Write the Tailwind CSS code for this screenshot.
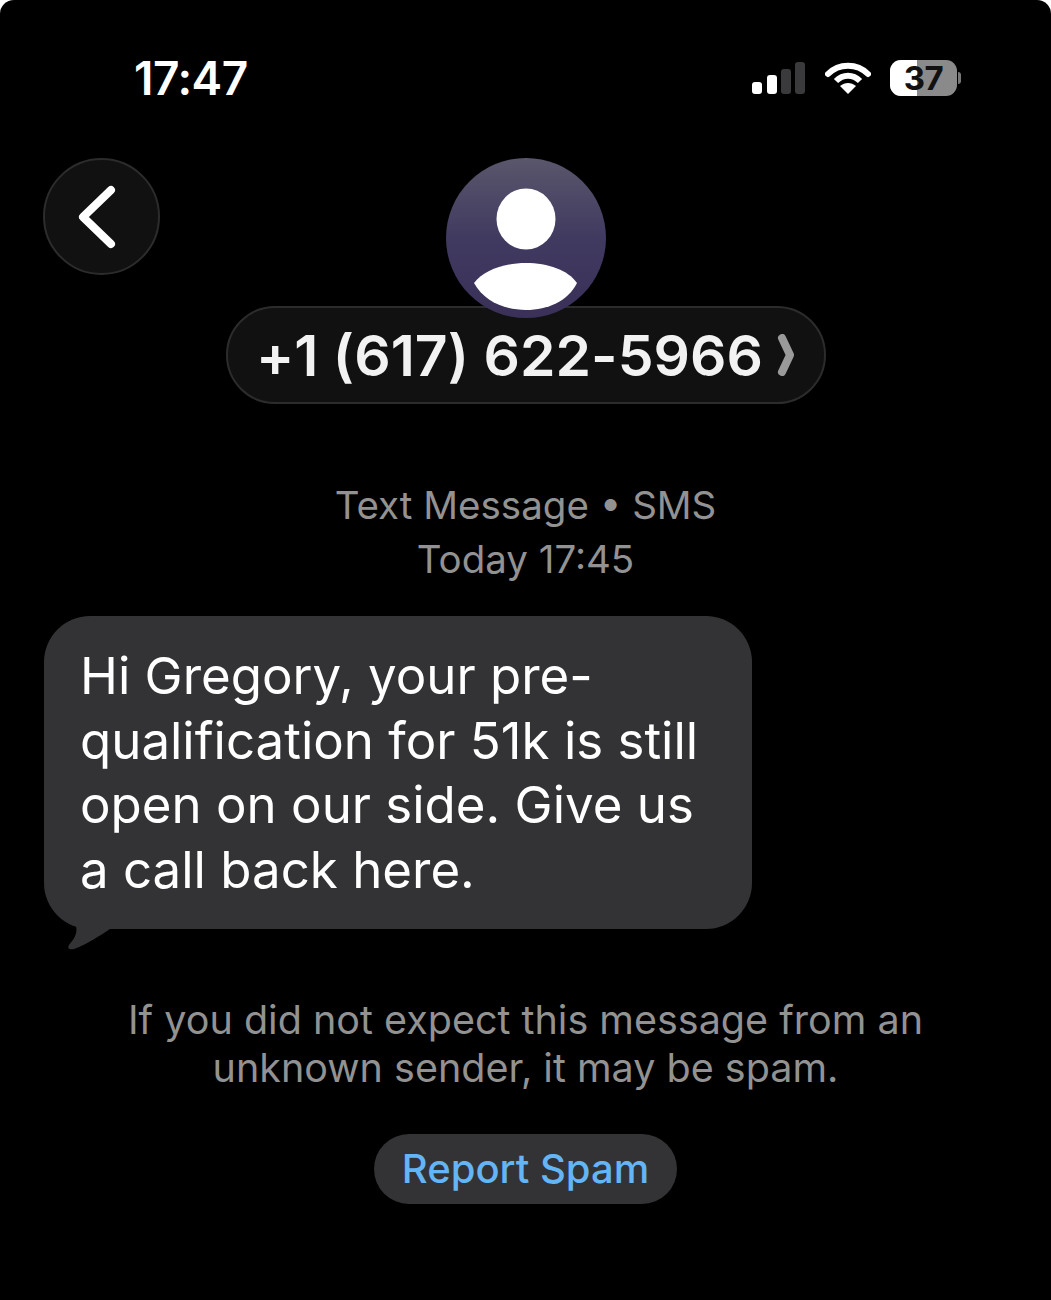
<!DOCTYPE html>
<html lang="en">
<head>
    <meta charset="UTF-8">
    <meta name="viewport" content="width=device-width, initial-scale=1.0">
    <title>Messages</title>
    <script src="https://cdn.jsdelivr.net/npm/@tailwindcss/browser@4"></script>
</head>
<body class="bg-white font-['Inter',sans-serif]">
    <div class="relative w-[1051px] h-[1300px] bg-black rounded-t-[14px] overflow-hidden flex flex-col items-center">

        <!-- Status bar -->
        <div class="w-full h-[158px] shrink-0 flex items-start justify-between pl-[134px] pr-[90px] pt-[50px]">
            <div class="text-[46px] leading-[56px] font-semibold text-white tracking-[-0.5px]">17:47</div>
            <div class="flex items-center pt-[10px]">
                <svg width="54" height="34" viewBox="0 0 54 34" class="mr-[19px]">
                    <rect x="0" y="21" width="10" height="12" rx="3" fill="#fff"/>
                    <rect x="15" y="14" width="10" height="19" rx="3" fill="#fff"/>
                    <rect x="29" y="8" width="10" height="25" rx="3" fill="#3a3a3c"/>
                    <rect x="43" y="1" width="10" height="32" rx="3" fill="#3a3a3c"/>
                </svg>
                <svg width="46" height="34" viewBox="0 0 46 34" class="mr-[19px]">
                    <path d="M3 13 C14 2 32 2 43 13" fill="none" stroke="#fff" stroke-width="6" stroke-linecap="round"/>
                    <path d="M11 20 C18 13 28 13 35 20" fill="none" stroke="#fff" stroke-width="6"/>
                    <path d="M23 33 L15 25 C20 21 26 21 31 25 Z" fill="#fff"/>
                </svg>
                <div class="relative flex items-center">
                    <div class="relative w-[67px] h-[36px] rounded-[11px] bg-[#8a8a8a] flex items-center justify-center">
                        <div class="absolute left-0 top-0 bottom-0 w-[27px] rounded-l-[11px] bg-white"></div>
                        <span class="relative text-[33px] leading-[36px] font-bold text-[#111] tracking-[-0.5px]">37</span>
                    </div>
                    <div class="w-[3px] h-[12px] ml-[1px] rounded-r-full bg-[#777]"></div>
                </div>
            </div>
        </div>

        <!-- Back button -->
        <div class="absolute left-[43px] top-[158px] w-[117px] h-[117px] rounded-full bg-[#111] border-2 border-[#2c2c2c] flex items-center justify-center">
            <svg width="40" height="64" viewBox="0 0 40 64" class="mr-[10px]">
                <path d="M34 5 L6 32 L34 59" fill="none" stroke="#fff" stroke-width="8" stroke-linecap="round" stroke-linejoin="round"/>
            </svg>
        </div>

        <!-- Avatar -->
        <div class="relative z-10 w-[160px] h-[160px] shrink-0 rounded-full overflow-hidden bg-gradient-to-b from-[#5a566b] via-[#413a60] to-[#3a3058]">
            <svg width="160" height="160" viewBox="0 0 160 160">
                <ellipse cx="80" cy="61" rx="29.5" ry="30.5" fill="#fff"/>
                <path d="M28 125 C38 112 58 105 80 105 C102 105 122 112 131 125 C122 143 102 152 80 152 C58 152 38 143 28 125 Z" fill="#fff"/>
            </svg>
        </div>

        <!-- Number pill -->
        <div class="-mt-[12px] w-[600px] h-[98px] shrink-0 rounded-full bg-[#111] border-2 border-[#2c2c2c] flex items-center justify-center gap-[14px]">
            <span class="text-[57px] leading-none font-semibold text-[#f2f2f2] tracking-[0.05px]">+1 (617) 622-5966</span>
            <svg width="18" height="42" viewBox="0 0 18 42">
                <path d="M5 4 L13 21 L5 38" fill="none" stroke="#9a9a9a" stroke-width="8" stroke-linecap="round" stroke-linejoin="round"/>
            </svg>
        </div>

        <!-- Timestamp -->
        <div class="mt-[74px] text-center text-[38.5px] leading-[54px] text-[#929292]">
            <div>Text Message • SMS</div>
            <div>Today 17:45</div>
        </div>

        <!-- Message bubble -->
        <div class="self-start relative ml-[44px] mt-[30px] w-[708px] h-[313px] rounded-[46px] bg-[#333335] pl-[36px] pr-[30px] pt-[28px] text-[51px] leading-[64.5px] text-white">
            <svg class="absolute left-[0px] top-[260px]" width="90" height="74" viewBox="0 0 90 74">
                <path d="M0 0 C2 24 14 42 32 50 C34 58 29 64 25 69 C23 73 26 74 30 73 C44 68 55 60 66 53 L90 53 L90 0 Z" fill="#333335"/>
            </svg>
            <div class="relative">Hi Gregory, your pre-</div>
            <div class="relative">qualification for 51k is still</div>
            <div class="relative">open on our side. Give us</div>
            <div class="relative">a call back here.</div>
        </div>

        <!-- Spam warning -->
        <div class="mt-[67px] text-center text-[39.5px] leading-[48px] text-[#929292]">
            <div>If you did not expect this message from an</div>
            <div>unknown sender, it may be spam.</div>
        </div>

        <!-- Report button -->
        <div class="mt-[42px] w-[303px] h-[70px] rounded-full bg-[#333335] flex items-center justify-center text-[40px] font-medium text-[#64b5f6]">Report Spam</div>
    </div>
</body>
</html>
